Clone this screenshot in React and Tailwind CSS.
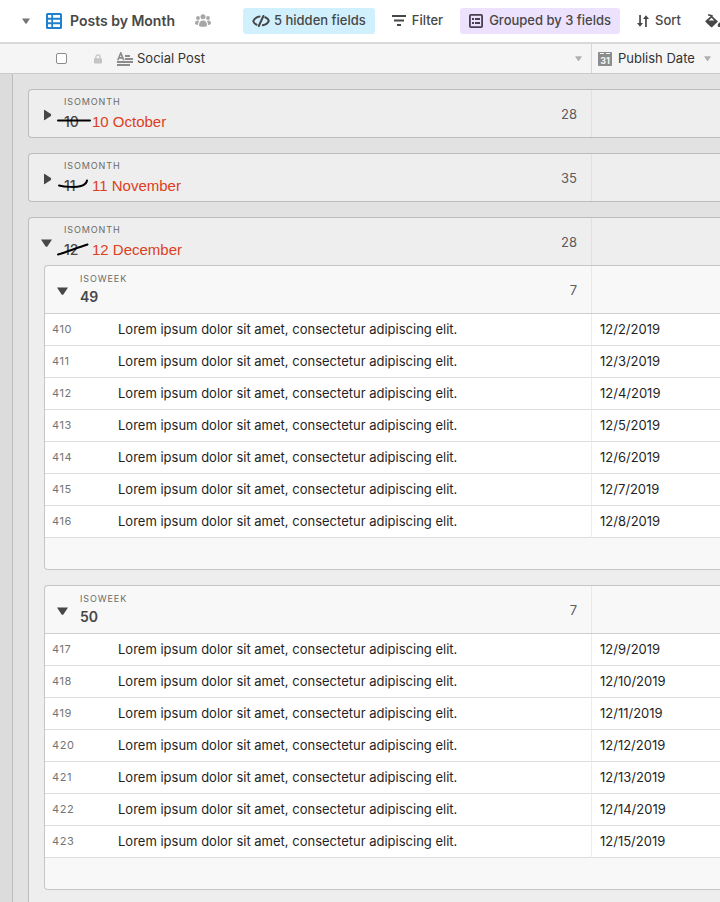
import { useState } from 'react';

const LOREM = 'Lorem ipsum dolor sit amet, consectetur adipiscing elit.';

const months = [
  { id: '10', name: '10 October', count: 28, strike: 'M2 8.5 L34 8.5', weeks: [] },
  { id: '11', name: '11 November', count: 35, strike: 'M3 9.5 C9 11 20 11.5 25 10 C28.5 9 30.5 7.5 31 4.5', weeks: [] },
  {
    id: '12',
    name: '12 December',
    count: 28,
    strike: 'M2 14.5 C11 12 20 8 31.5 4.5',
    weeks: [
      { week: 49, firstRow: 410, firstDay: 2 },
      { week: 50, firstRow: 417, firstDay: 9 }
    ]
  }
];

function Caret({ className }) {
  return (
    <svg viewBox="0 0 10 7" className={className} fill="currentColor" aria-hidden="true">
      <path d="M0 0.3 H10 L5.8 6.6 Q5 7.2 4.2 6.6 Z" />
    </svg>
  );
}

function TableIcon() {
  return (
    <svg width="16" height="16" viewBox="0 0 16 16" className="text-[#2180ce]" aria-hidden="true">
      <rect width="16" height="16" rx="1.5" fill="currentColor" />
      <path fill="#fff" d="M2 2h3.3v2.7H2zM7 2h7v2.7H7zM2 6.7h3.3v2.6H2zM7 6.7h7v2.6H7zM2 11.3h3.3V14H2zM7 11.3h7V14H7z" />
    </svg>
  );
}

function UsersIcon() {
  return (
    <svg width="16" height="13" viewBox="0 0 16 13" fill="#a6a6a6" aria-hidden="true">
      <circle cx="8" cy="2.8" r="2.5" />
      <circle cx="3" cy="4" r="1.9" />
      <circle cx="13" cy="4" r="1.9" />
      <path d="M4 11.2c0-3 1.6-4.8 4-4.8s4 1.8 4 4.8c0 1-1.5 1.6-4 1.6s-4-.6-4-1.6z" />
      <path d="M0 9.3c0-1.8 1-2.9 2.5-2.9.8 0 1.3.2 1.7.5C3.4 7.9 3 9.2 3 10.9 1.2 10.8 0 10.3 0 9.3zM16 9.3c0-1.8-1-2.9-2.5-2.9-.8 0-1.3.2-1.7.5.8 1 1.2 2.3 1.2 4 1.8-.1 3-.6 3-1.6z" />
    </svg>
  );
}

function HiddenIcon() {
  return (
    <svg width="18" height="12" viewBox="0 0 18 12" fill="none" stroke="#474747" strokeWidth="2" strokeLinecap="round" strokeLinejoin="round" aria-hidden="true">
      <path d="M7.5 1.6C4.4 2.2 2.1 3.8 1.3 6.2c.5 1.5 1.5 2.6 3.2 3.5M13.2 2.2c2 .8 3.200 2 3.600 3.600-.8 2.200-3 3.800-6 4.500" />
      <path d="M11.400 1 6.800 11" />
    </svg>
  );
}

function FilterIcon() {
  return (
    <svg width="14" height="11" viewBox="0 0 14 11" fill="#474747" aria-hidden="true">
      <path d="M0 0h14v2H0zM2 4.5h10v2H2zM5 9h4v2H5z" />
    </svg>
  );
}

function GroupIcon() {
  return (
    <svg width="14" height="14" viewBox="0 0 14 14" aria-hidden="true">
      <rect x="0.9" y="0.9" width="12.2" height="12.2" rx="1" fill="none" stroke="#474050" strokeWidth="1.8" />
      <path fill="#474050" d="M3 4h2v2H3zM6 4h5v2H6zM3 8h2v2H3zM6 8h5v2H6z" />
    </svg>
  );
}

function SortIcon() {
  return (
    <svg width="12" height="12" viewBox="0 0 12 12" fill="#474747" aria-hidden="true">
      <path d="M2.2 0h1.700v8H6l-3 3.800L0 8h2.200zM8.100 12h1.700V4H12L9 0.200 6 4h2.100z" />
    </svg>
  );
}

function PaintIcon() {
  return (
    <svg width="17" height="14" viewBox="0 0 17 14" aria-hidden="true">
      <path d="M3.800.9 7 1.800" stroke="#474747" strokeWidth="1.600" strokeLinecap="round" />
      <path d="M6.500 1.400 13 7.400 7.300 12.900q-.7.600-1.400 0L.6 7.900q-.5-.6 0-1.200z" fill="#474747" />
      <path d="M6.500 3.700 9.200 6.400H3.700z" fill="#fff" />
      <path d="M14.300 8.300c1 1.500 1.600 2.400 1.600 3.100a1.600 1.600 0 0 1-3.200 0c0-.7.600-1.600 1.600-3.100z" fill="#474747" />
    </svg>
  );
}

function LockIcon() {
  return (
    <svg width="8" height="10" viewBox="0 0 8 10" aria-hidden="true">
      <path d="M1.900 5V3a2.100 2.100 0 0 1 4.200 0v2" fill="none" stroke="#c4c4c4" strokeWidth="1.300" />
      <rect y="4.300" width="8" height="5.200" rx="0.800" fill="#c4c4c4" />
    </svg>
  );
}

function LongTextIcon() {
  return (
    <svg width="16" height="14" viewBox="0 0 16 14" aria-hidden="true">
      <path d="M0.800 8.300 3.800 0.900 6.800 8.300M1.900 5.900h3.800" fill="none" stroke="#8c8c8c" strokeWidth="1.600" />
      <path d="M8 3h5v2H8zM8 6h8v2H8zM0 9h16v2H0zM0 12h13v2H0z" fill="#8c8c8c" />
    </svg>
  );
}

function CalendarIcon() {
  return (
    <svg width="14" height="14" viewBox="0 0 14 14" aria-hidden="true">
      <rect width="14" height="14" rx="1" fill="#8c8c8c" />
      <path d="M2 1.500h4M8 1.500h4" stroke="#f5f5f5" strokeWidth="1" />
      <text x="7" y="11.500" textAnchor="middle" fontSize="9" fontWeight="700" fill="#f5f5f5">31</text>
    </svg>
  );
}

function Toolbar() {
  return (
    <header className="flex h-11 items-center overflow-hidden border-b-2 border-[#d9d9d9] bg-white pb-px pl-[22px] text-[13px] font-medium text-[#474747] *:shrink-0">
      <button className="mr-5 flex items-center gap-2 text-sm font-semibold text-[#474747]">
        <Caret className="mr-2 h-[6px] w-2 text-[#757575]" />
        <TableIcon />
        Posts by Month
      </button>
      <button aria-label="Collaborators" className="mr-8">
        <UsersIcon />
      </button>
      <button className="mr-[17px] flex h-[26px] items-center gap-1 rounded-[3px] bg-[#d0f0fd] px-[9px]">
        <HiddenIcon />
        5 hidden fields
      </button>
      <button className="mr-[17px] flex h-[26px] items-center gap-1.5">
        <FilterIcon />
        Filter
      </button>
      <button className="mr-[17px] flex h-[26px] items-center gap-1.5 rounded-[3px] bg-[#ede2fe] px-[9px]">
        <GroupIcon />
        Grouped by 3 fields
      </button>
      <button className="mr-6 flex h-[26px] items-center gap-1.5">
        <SortIcon />
        Sort
      </button>
      <button className="flex h-[26px] items-center" aria-label="Color">
        <PaintIcon />
      </button>
    </header>
  );
}

function ColumnHeader() {
  return (
    <div className="flex h-[30px] border-b border-[#cacaca] bg-[#f5f5f5] text-[13px] text-[#333]">
      <div className="flex min-w-0 flex-1 items-center pr-[9px] pl-14">
        <input
          type="checkbox"
          aria-label="Select all rows"
          className="mr-[27px] size-[11px] appearance-none rounded-[2px] border border-[#8c8c8c] bg-white"
        />
        <LockIcon />
        <span className="ml-[15px] flex flex-1 items-center gap-1">
          <LongTextIcon />
          Social Post
        </span>
        <Caret className="h-[5px] w-[7px] text-[#b0b0b0]" />
      </div>
      <div className="flex w-[129px] shrink-0 items-center border-l border-[#d5d5d5] pr-[9px] pl-[6px]">
        <CalendarIcon />
        <span className="ml-[6px] flex-1 whitespace-nowrap">Publish Date</span>
        <Caret className="h-[5px] w-[7px] text-[#b0b0b0]" />
      </div>
    </div>
  );
}

function WeekGroup({ week, firstRow, firstDay }) {
  const [open, setOpen] = useState(true);
  const rows = Array.from({ length: 7 }, (_, i) => ({ id: firstRow + i, date: `12/${firstDay + i}/2019` }));

  return (
    <section className="overflow-hidden rounded-l-[4px] border border-r-0 border-[#c6c6c6] bg-[#f8f8f8]">
      <div className="flex h-12 border-b border-[#cfcfcf]">
        <div className="flex flex-1 items-center pt-0.5 pr-[14px] pl-3">
          <button aria-label="Toggle week" onClick={() => setOpen(!open)} className="w-[11px] text-[#474747]">
            <Caret className={open ? 'h-2 w-[11px]' : 'h-2 w-[11px] -rotate-90'} />
          </button>
          <div className="ml-3 flex-1 self-start pt-[5px]">
            <div className="text-[9px] leading-3 tracking-widest text-[#6b6b6b]">ISOWEEK</div>
            <div className="text-sm leading-6 font-semibold text-[#474747]">{week}</div>
          </div>
          <span className="text-[13px] text-[#5c5c5c]">{rows.length}</span>
        </div>
        <div className="w-[129px] shrink-0 border-l border-[#e8e8e8]" />
      </div>
      {open && (
        <table className="w-full table-fixed border-separate border-spacing-0 bg-white text-[13px] text-[#1f1f1f]">
          <colgroup>
            <col className="w-[73px]" />
            <col />
            <col className="w-[129px]" />
          </colgroup>
          <tbody>
            {rows.map((row) => (
              <tr key={row.id} className="h-8 *:border-b *:border-b-[#dedede]">
                <td className="pl-[7px] text-[11px] tracking-wider text-[#757575]">{row.id}</td>
                <td className="truncate">{LOREM}</td>
                <td className="border-l border-l-[#ececec] pl-2">{row.date}</td>
              </tr>
            ))}
          </tbody>
        </table>
      )}
      <div className="h-[31px]" />
    </section>
  );
}

function MonthGroup({ month }) {
  const [open, setOpen] = useState(month.weeks.length > 0);

  return (
    <section
      className={`rounded-tl-[4px] border-t border-l border-[#bdbdbd] bg-[#eee] ${
        open ? 'flex-1 pb-3' : 'rounded-bl-[4px] border-b'
      }`}
    >
      <div className="flex h-[47px]">
        <div className="flex flex-1 items-center pt-0.5 pr-[14px] pl-3">
          <button aria-label="Toggle month" onClick={() => setOpen(!open)} className="w-[11px] text-[#474747]">
            <Caret className={open ? 'h-2 w-[11px]' : 'ml-px h-2 w-[11px] -rotate-90'} />
          </button>
          <div className="ml-3 flex-1 self-start pt-1">
            <div className="text-[9px] leading-3 tracking-widest text-[#6b6b6b]">ISOMONTH</div>
            <div className="flex items-center leading-7">
              <span className="relative w-7 text-sm leading-7 font-medium text-[#474747]">
                {month.id}
                <svg width="36" height="18" viewBox="0 0 36 18" className="absolute top-1 -left-2" aria-hidden="true">
                  <path d={month.strike} fill="none" stroke="#000" strokeWidth="2" strokeLinecap="round" />
                </svg>
              </span>
              <span className="font-['Liberation_Sans',Arial,sans-serif] text-[15px] leading-7 text-[#dc3f22]">{month.name}</span>
            </div>
          </div>
          <span className="text-[13px] text-[#5c5c5c]">{month.count}</span>
        </div>
        <div className="w-[129px] shrink-0 border-l border-[#e0e0e0]" />
      </div>
      {open && (
        <div className="flex flex-col gap-[15px] pl-[15px]">
          {month.weeks.map((w) => (
            <WeekGroup key={w.week} {...w} />
          ))}
        </div>
      )}
    </section>
  );
}

export default function App() {
  return (
    <div className="flex min-h-screen flex-col bg-[#dcdcdc] font-['Inter',sans-serif]">
      <Toolbar />
      <ColumnHeader />
      <main className="ml-3 flex flex-1 flex-col gap-[15px] border-l border-[#bdbdbd] bg-[#e2e2e2] pt-[15px] pl-[15px]">
        {months.map((month) => (
          <MonthGroup key={month.id} month={month} />
        ))}
      </main>
    </div>
  );
}
